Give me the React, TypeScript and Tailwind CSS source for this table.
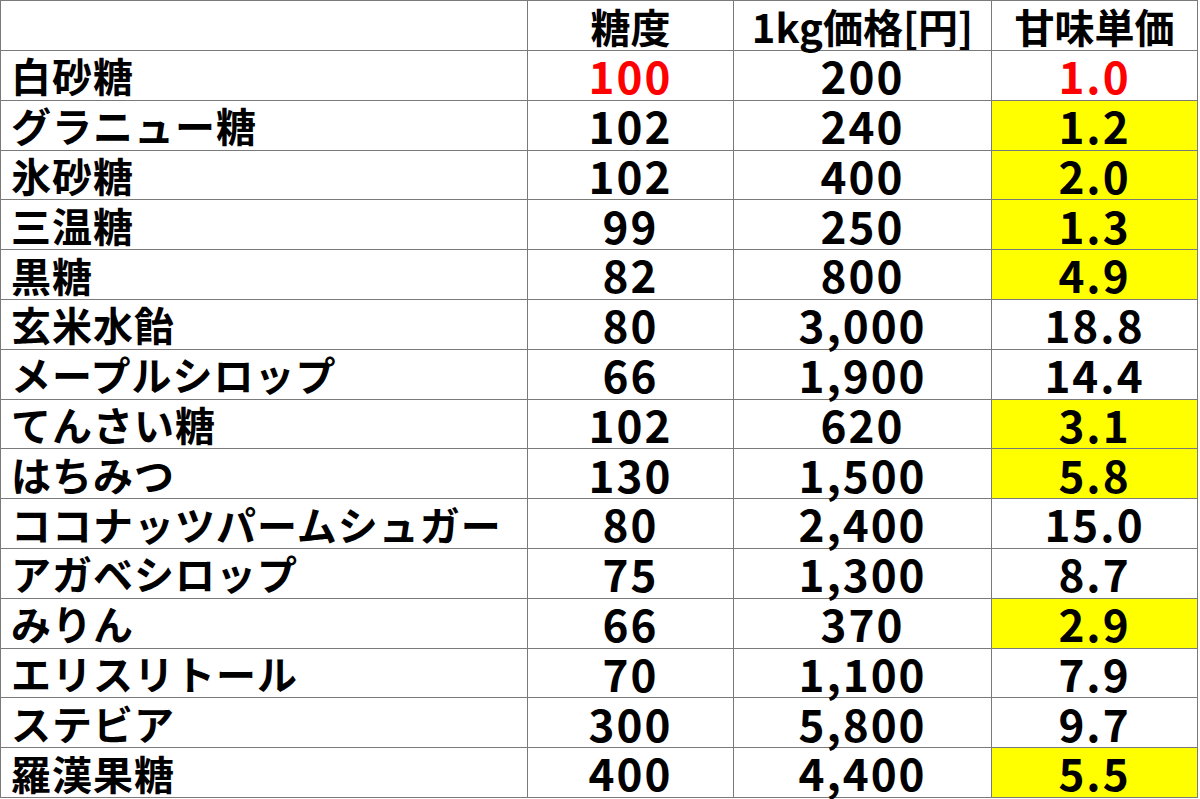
const ROWS = [
  { name: '白砂糖', brix: '100', price: '200', unit: '1.0', red: true },
  { name: 'グラニュー糖', brix: '102', price: '240', unit: '1.2', hl: true },
  { name: '氷砂糖', brix: '102', price: '400', unit: '2.0', hl: true },
  { name: '三温糖', brix: '99', price: '250', unit: '1.3', hl: true },
  { name: '黒糖', brix: '82', price: '800', unit: '4.9', hl: true },
  { name: '玄米水飴', brix: '80', price: '3,000', unit: '18.8' },
  { name: 'メープルシロップ', brix: '66', price: '1,900', unit: '14.4' },
  { name: 'てんさい糖', brix: '102', price: '620', unit: '3.1', hl: true },
  { name: 'はちみつ', brix: '130', price: '1,500', unit: '5.8', hl: true },
  { name: 'ココナッツパームシュガー', brix: '80', price: '2,400', unit: '15.0' },
  { name: 'アガベシロップ', brix: '75', price: '1,300', unit: '8.7' },
  { name: 'みりん', brix: '66', price: '370', unit: '2.9', hl: true },
  { name: 'エリスリトール', brix: '70', price: '1,100', unit: '7.9' },
  { name: 'ステビア', brix: '300', price: '5,800', unit: '9.7' },
  { name: '羅漢果糖', brix: '400', price: '4,400', unit: '5.5', hl: true },
]

const cell = 'border border-[#7a7a7a] p-0 leading-[1.1]'
const num = `${cell} text-center text-[44px] tracking-[2px]`

export default function App() {
  return (
    <div
      className="h-[799px] w-[1200px] bg-white text-black"
      style={{ fontFamily: '"Noto Sans CJK JP", "Noto Sans", sans-serif' }}
    >
      <table className="w-[1197px] table-fixed border-collapse border border-black text-[40px] font-bold">
        <colgroup>
          <col className="w-[527px]" />
          <col className="w-[206px]" />
          <col className="w-[258px]" />
          <col className="w-[206px]" />
        </colgroup>
        <thead>
          <tr className="h-[50px]">
            <th className={cell}></th>
            <th className={`${cell} text-center`}>糖度</th>
            <th className={`${cell} text-center`}>1kg価格[円]</th>
            <th className={`${cell} text-center`}>甘味単価</th>
          </tr>
        </thead>
        <tbody>
          {ROWS.map((r) => (
            <tr key={r.name} className="h-[49.8px]">
              <td className={`${cell} whitespace-nowrap pl-[10px] text-left tracking-[1px]`}>{r.name}</td>
              <td className={`${num} ${r.red ? 'text-[#ff0000]' : ''}`}>{r.brix}</td>
              <td className={num}>{r.price}</td>
              <td className={`${num} ${r.hl ? 'bg-[#ffff00]' : ''} ${r.red ? 'text-[#ff0000]' : ''}`}>
                {r.unit}
              </td>
            </tr>
          ))}
        </tbody>
      </table>
    </div>
  )
}
